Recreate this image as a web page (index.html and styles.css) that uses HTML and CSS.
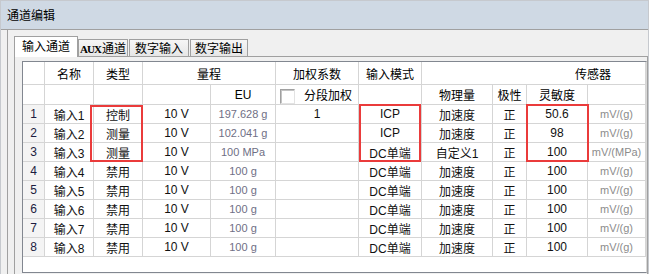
FILE: index.html
```html
<!DOCTYPE html>
<html>
	<head>
		<meta charset="UTF-8">
		<title>通道编辑</title>
		<meta name="viewport" content="width=device-width, initial-scale=1.0">
		<link rel="stylesheet" href="styles.css">
	</head>
	<body>
		<div class="window">
			<div class="titlebar">通道编辑</div>
			<div class="client">
				<div class="frame">
					<div class="tabs">
						<div class="tab active">输入通道</div>
						<div class="tab tab-aux"><span class="aux">AUX</span>通道</div>
						<div class="tab tab-in">数字输入</div>
						<div class="tab tab-out">数字输出</div>
					</div>
					<div class="panel">
						<div class="grid-wrap">
							<table class="grid">
								<colgroup>
									<col style="width:22px"><col style="width:49px"><col style="width:49px">
									<col style="width:68px"><col style="width:65px"><col style="width:83px">
									<col style="width:63px"><col style="width:71px"><col style="width:34px">
									<col style="width:61px"><col style="width:58px">
								</colgroup>
								<thead>
									<tr class="h1">
										<td></td>
										<td>名称</td>
										<td>类型</td>
										<td colspan="2">量程</td>
										<td>加权系数</td>
										<td>输入模式</td>
										<td colspan="4" class="sensor">传感器</td>
									</tr>
									<tr class="h2">
										<td></td>
										<td></td>
										<td></td>
										<td></td>
										<td>EU</td>
										<td class="seg"><span class="check"></span>分段加权</td>
										<td></td>
										<td>物理量</td>
										<td>极性</td>
										<td>灵敏度</td>
										<td></td>
									</tr>
								</thead>
								<tbody>
									<tr>
										<td class="idx">1</td><td>输入1</td><td>控制</td><td>10 V</td>
										<td class="dim">197.628 g</td><td>1</td><td>ICP</td><td>加速度</td>
										<td>正</td><td>50.6</td><td class="unit">mV/(g)</td>
									</tr>
									<tr>
										<td class="idx">2</td><td>输入2</td><td>测量</td><td>10 V</td>
										<td class="dim">102.041 g</td><td></td><td>ICP</td><td>加速度</td>
										<td>正</td><td>98</td><td class="unit">mV/(g)</td>
									</tr>
									<tr>
										<td class="idx">3</td><td>输入3</td><td>测量</td><td>10 V</td>
										<td class="dim">100 MPa</td><td></td><td>DC单端</td><td>自定义1</td>
										<td>正</td><td>100</td><td class="unit">mV/(MPa)</td>
									</tr>
									<tr>
										<td class="idx">4</td><td>输入4</td><td>禁用</td><td>10 V</td>
										<td class="dim">100 g</td><td></td><td>DC单端</td><td>加速度</td>
										<td>正</td><td>100</td><td class="unit">mV/(g)</td>
									</tr>
									<tr>
										<td class="idx">5</td><td>输入5</td><td>禁用</td><td>10 V</td>
										<td class="dim">100 g</td><td></td><td>DC单端</td><td>加速度</td>
										<td>正</td><td>100</td><td class="unit">mV/(g)</td>
									</tr>
									<tr>
										<td class="idx">6</td><td>输入6</td><td>禁用</td><td>10 V</td>
										<td class="dim">100 g</td><td></td><td>DC单端</td><td>加速度</td>
										<td>正</td><td>100</td><td class="unit">mV/(g)</td>
									</tr>
									<tr>
										<td class="idx">7</td><td>输入7</td><td>禁用</td><td>10 V</td>
										<td class="dim">100 g</td><td></td><td>DC单端</td><td>加速度</td>
										<td>正</td><td>100</td><td class="unit">mV/(g)</td>
									</tr>
									<tr>
										<td class="idx">8</td><td>输入8</td><td>禁用</td><td>10 V</td>
										<td class="dim">100 g</td><td></td><td>DC单端</td><td>加速度</td>
										<td>正</td><td>100</td><td class="unit">mV/(g)</td>
									</tr>
								</tbody>
							</table>
							<!-- 红框标注 -->
							<div class="mark mark-type"></div>
							<div class="mark mark-mode"></div>
							<div class="mark mark-sens"></div>
						</div>
					</div>
				</div>
			</div>
		</div>
	</body>
</html>
```

FILE: styles.css
```css
*{
	margin: 0;
	padding: 0;
	box-sizing: border-box;
}
body{
	width: 649px;
	height: 274px;
	overflow: hidden;
	background: #f0f0f0;
	font-family: "Liberation Sans", "Noto Sans CJK SC", sans-serif;
	font-size: 12px;
	color: #000;
}
.window{
	height: 274px;
	border: 1px solid #c6c9ce;
	border-bottom: none;
	background: #f0f0f0;
}
.titlebar{
	height: 29px;
	line-height: 28px;
	padding-left: 6px;
	background: #cfd9e4;
	border-bottom: 1px solid #a0a0a0;
	font-family: "Noto Sans CJK SC", sans-serif;
	font-size: 12px;
}
.client{
	padding-left: 6px;
}
.frame{
	height: 244px;
	border-left: 1px solid #a0a0a0;
	padding-left: 6px;
}
.tabs{
	display: flex;
	align-items: flex-end;
	height: 26px;
	font-family: "Noto Sans CJK SC", sans-serif;
}
.tab{
	height: 17px;
	line-height: 16px;
	text-align: center;
	border: 1px solid #a0a0a0;
	border-bottom: none;
	background: linear-gradient(#f6f6f6, #e6e6e6);
	font-size: 12px;
}
.tab.active{
	position: relative;
	z-index: 2;
	width: 64px;
	height: 21px;
	line-height: 18px;
	margin-bottom: -1px;
	background: #fff;
}
.tab-aux{
	width: 50px;
}
.tab-in{
	width: 60px;
	margin-left: 1px;
}
.tab-out{
	width: 58px;
	margin-left: 1px;
}
.aux{
	font-family: "Liberation Serif", serif;
	font-weight: bold;
	font-size: 11px;
	letter-spacing: -1px;
	margin-right: 1px;
}
.panel{
	height: 218px;
	border: 1px solid #a0a0a0;
	border-bottom: none;
	padding: 4px 0 0 7px;
	background: #f0f0f0;
}
.grid-wrap{
	position: relative;
	height: 212px;
	background: #fff;
	border: 1px solid #828790;
	border-right-color: #d8d8d8;
	overflow: hidden;
}
.grid{
	width: 623px;
	table-layout: fixed;
	border-collapse: separate;
	border-spacing: 0;
	font-size: 11px;
}
.grid td{
	height: 19px;
	padding: 0;
	text-align: center;
	white-space: nowrap;
	overflow: hidden;
	border-right: 1px solid #d5d5d5;
	border-bottom: 1px solid #d5d5d5;
}
.grid .h1 td{
	height: 23px;
	font-size: 12px;
}
.grid .h2 td{
	height: 20px;
	font-size: 12px;
}
.grid td.sensor{
	text-align: left;
	padding-left: 153px;
}
.grid td.seg{
	text-align: left;
	padding-left: 4px;
}
.check{
	display: inline-block;
	width: 15px;
	height: 15px;
	vertical-align: -4px;
	margin-right: 9px;
	background: #fff;
	border: 1px solid;
	border-color: #a0a0a0 #e3e3e3 #e3e3e3 #a0a0a0;
	box-shadow: inset 1px 1px 0 #c4c4c4;
}
.grid tbody td{
	font-size: 12px;
	color: #111;
}
.grid td.idx{
	background: #f4f4f4;
	color: #1c1c40;
}
.grid td.dim{
	color: #6f6f85;
	font-size: 11px;
}
.grid td.unit{
	color: #8c8c8c;
	font-size: 11px;
}
.mark{
	position: absolute;
	border: 2px solid #ea3b3b;
}
.mark-type{
	left: 67px;
	top: 43px;
	width: 53px;
	height: 57px;
}
.mark-mode{
	left: 336px;
	top: 42px;
	width: 62px;
	height: 58px;
}
.mark-sens{
	left: 503px;
	top: 42px;
	width: 63px;
	height: 58px;
}
```
